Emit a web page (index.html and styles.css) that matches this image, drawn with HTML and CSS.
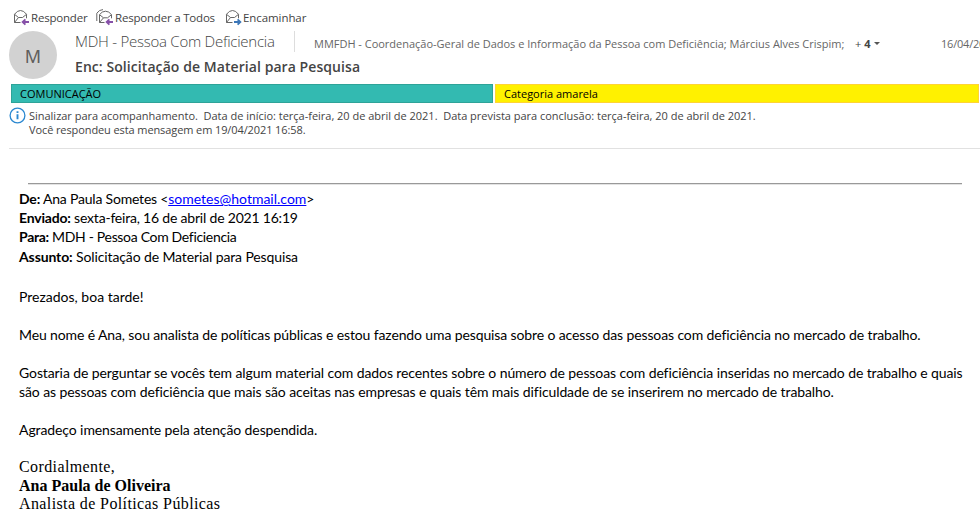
FILE: index.html
```html
<!DOCTYPE html>
<html lang="pt-BR">
<head>
<meta charset="utf-8">
<title>Enc: Solicitação de Material para Pesquisa</title>
<link rel="stylesheet" href="styles.css">
</head>
<body>
<main class="message">
  <nav class="actions">
    <a class="action reply"><svg width="17" height="17" viewBox="0 0 17 17"><path class="env" d="M7.5 13.5h-6V5.3Q4.2 1.5 7.5 1.5t6 3.8v4M1.5 5.3l4 3.2h4l4-3.2M1.5 13.5l4-5"/><path class="purple" d="M16 13H10M12.4 10.3 9.6 13l2.8 2.7"/></svg><span>Responder</span></a>
    <a class="action reply-all"><svg width="18" height="17" viewBox="0 0 18 17"><path class="env" d="M.8 12V4.2Q3.3.6 7 .6M8.5 13.5h-5V5.7Q6 2.2 9.5 2.2t6 3.5v3.6M3.5 5.7l4 3.1h4l4-3.1M3.5 13.5l4-4.7"/><path class="purple" d="M17 13H11M13.4 10.3 10.6 13l2.8 2.7"/></svg><span>Responder a Todos</span></a>
    <a class="action forward"><svg width="17" height="17" viewBox="0 0 17 17"><path class="env" d="M7.5 13.5h-6V5.3Q4.2 1.5 7.5 1.5t6 3.8v4M1.5 5.3l4 3.2h4l4-3.2M1.5 13.5l4-5"/><path class="blue" d="M9 13H15M12.6 10.3 15.4 13l-2.8 2.7"/></svg><span>Encaminhar</span></a>
  </nav>
  <header class="head">
    <div class="avatar">M</div>
    <div class="who">
      <div class="people">
        <span class="sender">MDH - Pessoa Com Deficiencia</span>
        <span class="recipients">MMFDH - Coordenação-Geral de Dados e Informação da Pessoa com Deficiência; Március Alves Crispim;</span>
        <span class="more">+ <b>4</b></span><i class="caret"></i>
        <span class="date">16/04/2021</span>
      </div>
      <h1 class="subject">Enc: Solicitação de Material para Pesquisa</h1>
    </div>
  </header>
  <div class="categories">
    <div class="cat teal">COMUNICAÇÃO</div>
    <div class="cat yellow">Categoria amarela</div>
  </div>
  <section class="info">
    <svg width="17" height="17" viewBox="0 0 17 17"><circle cx="8.5" cy="8.5" r="7.4"/><path class="info-mark" d="M8.5 7.3v4.9M8.5 4.3v1.8"/></svg>
    <div class="info-text">
      <p>Sinalizar para acompanhamento.&nbsp; Data de início: terça-feira, 20 de abril de 2021.&nbsp; Data prevista para conclusão: terça-feira, 20 de abril de 2021.</p>
      <p class="replied">Você respondeu esta mensagem em 19/04/2021 16:58.</p>
    </div>
  </section>
  <article class="body">
    <hr>
    <p class="from"><b>De:</b> Ana Paula Sometes &lt;<a class="mail">sometes@hotmail.com</a>&gt;</p>
    <p class="sent"><b>Enviado:</b> sexta-feira, 16 de abril de 2021 16:19</p>
    <p class="to"><b>Para:</b> MDH - Pessoa Com Deficiencia</p>
    <p class="about"><b>Assunto:</b> Solicitação de Material para Pesquisa</p>
    <p class="greeting">Prezados, boa tarde!</p>
    <p class="gap intro">Meu nome é Ana, sou analista de políticas públicas e estou fazendo uma pesquisa sobre o acesso das pessoas com deficiência no mercado de trabalho.</p>
    <p class="gap">Gostaria de perguntar se vocês tem algum material com dados recentes sobre o número de pessoas com deficiência inseridas no mercado de trabalho e quais<br>são as pessoas com deficiência que mais são aceitas nas empresas e quais têm mais dificuldade de se inserirem no mercado de trabalho.</p>
    <p class="gap">Agradeço imensamente pela atenção despendida.</p>
    <div class="signature">
      <p>Cordialmente,</p>
      <p><b>Ana Paula de Oliveira</b></p>
      <p>Analista de Políticas Públicas</p>
    </div>
  </article>
</main>
</body>
</html>
```

FILE: styles.css
```css
* { box-sizing: border-box; }
body { margin: 0; width: 980px; height: 530px; overflow: hidden; background: #fff; color: #444; font: 12px/14px "Open Sans", "Noto Sans", sans-serif; }
p, h1 { margin: 0; white-space: nowrap; }
svg { flex: none; fill: none; }
.message { white-space: nowrap; }
.actions { display: flex; height: 31px; padding: 9px 0 0 13px; }
.action { display: flex; gap: 1px; align-items: center; height: 17px; font-size: 11.5px; letter-spacing: -0.2px; }
.reply { width: 83px; }
.reply-all { width: 129px; }
.forward { letter-spacing: -0.08px; }
.env { stroke: #666; stroke-width: 1; }
.purple { stroke: #8650a8; stroke-width: 1.8; }
.blue { stroke: #3c77b8; stroke-width: 1.8; }
.head { display: flex; gap: 18px; height: 53px; padding-left: 9px; }
.avatar { flex: none; width: 48px; height: 48px; border-radius: 50%; background: #d2d2d2; color: #605e5c; font: 18px/50px "Noto Sans", sans-serif; text-align: center; }
.people { display: flex; height: 21px; align-items: center; }
.people > * { flex: none; }
.sender { width: 219px; font-size: 15px; font-weight: 300; line-height: 21px; letter-spacing: -0.25px; }
.recipients { width: 561px; padding-left: 19px; border-left: 1px solid #ddd; height: 21px; line-height: 25px; font-size: 11px; letter-spacing: -0.01px; color: #666; }
.more { width: 19px; font-size: 11px; padding-top: 4px; }
.caret { margin-top: 4px; border: 3px solid transparent; border-top-color: #555; border-bottom: 0; }
.date { margin-left: 61px; font-size: 11px; letter-spacing: -0.2px; padding-top: 4px; color: #666; }
.subject { font-size: 14px; font-weight: 600; line-height: 30px; letter-spacing: 0.07px; }
.categories { display: flex; gap: 2px; padding-left: 11px; height: 19px; }
.cat { height: 19px; padding-left: 8px; border: 1px solid; color: #000; font-size: 11px; line-height: 18px; }
.teal { width: 482px; background: #33bab1; border-color: #2ea398; }
.yellow { width: 484px; background: #fff100; border-color: #ffd335; }
.info { display: flex; gap: 3px; height: 46px; margin-left: 9px; padding-top: 4px; border-bottom: 1px solid #e1e1e1; font-size: 11px; letter-spacing: -0.015px; }
.info svg { stroke: #2b88d0; stroke-width: 1.3; }
.info .info-mark { stroke-width: 1.9; }
.info-text { padding-top: 2px; }
.replied { letter-spacing: -0.1px; }
.body { padding: 34px 18px 0 19px; color: #000; font: 14px/19px Lato, sans-serif; letter-spacing: -0.1px; }
hr { margin: 0 0 4px 9px; border: 0; height: 2px; background: linear-gradient(#999 50%, #e3e3e3 50%); }
.from { letter-spacing: -0.2px; }
.sent { letter-spacing: -0.2px; }
.to { letter-spacing: -0.32px; }
.about { margin-top: 1px; letter-spacing: -0.12px; }
.greeting { margin-top: 21px; letter-spacing: 0; }
.gap { margin-top: 19px; }
.intro { letter-spacing: -0.12px; }
.mail { color: #00f; text-decoration: underline; letter-spacing: 0; }
.signature { margin-top: 19px; font: 16px/18.5px "Liberation Serif", serif; letter-spacing: 0.39px; }
.signature b { letter-spacing: 0; }
```
